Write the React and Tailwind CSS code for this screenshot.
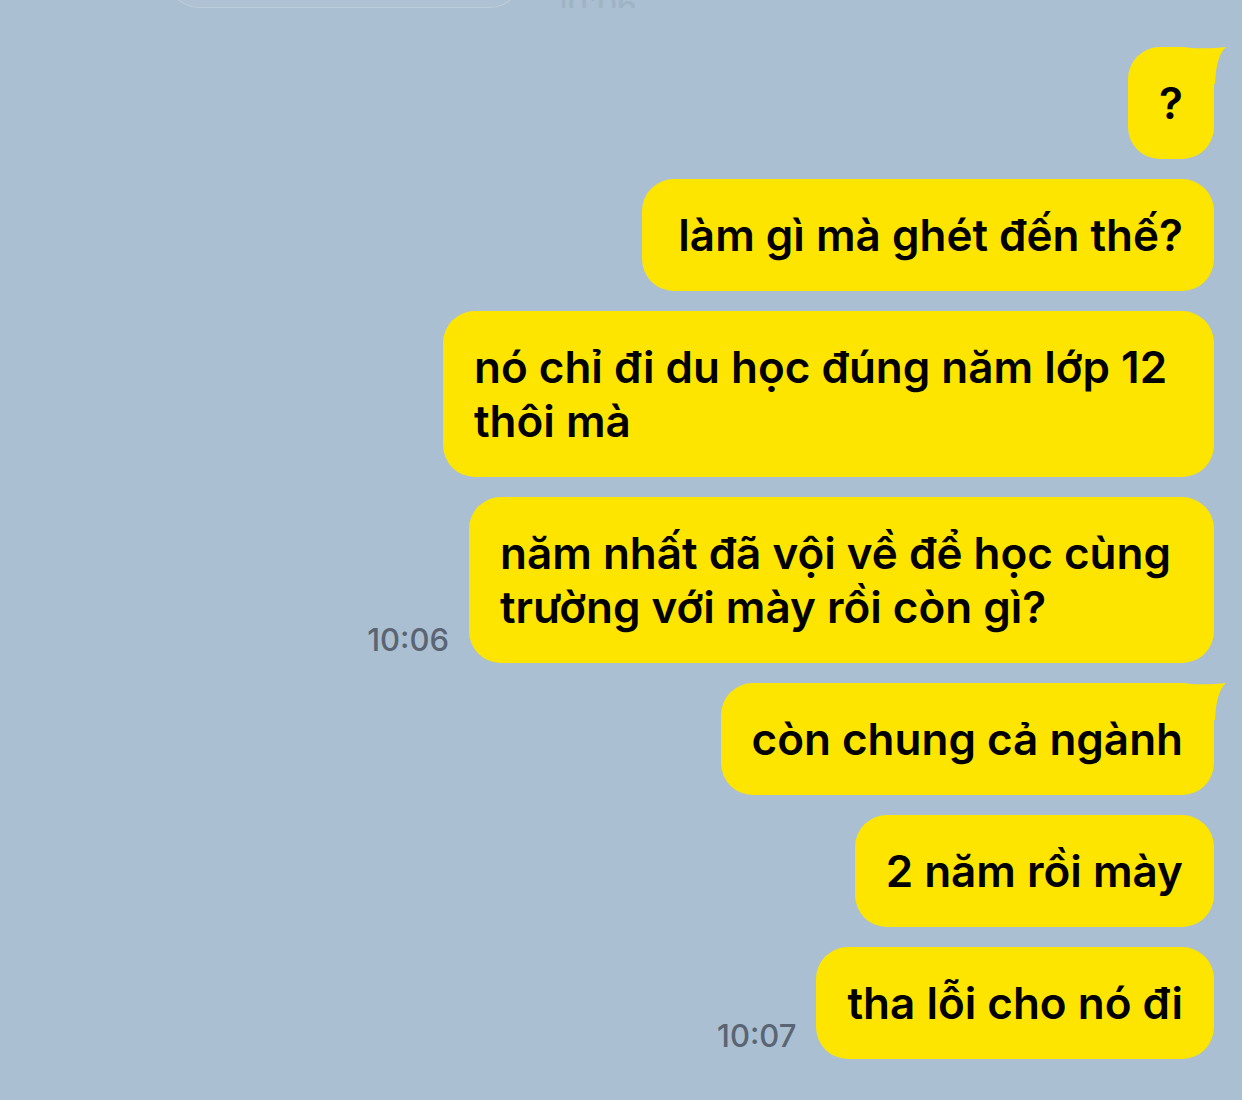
function Tail() {
  return (
    <svg viewBox="0 0 40 40" className="absolute -right-[14px] -top-[1px] w-[40px] h-[40px]" aria-hidden="true">
      <path d="M0 2 Q24 3 38 1 Q28 10 27 38 L0 38 Z" fill="#fee500" />
    </svg>
  )
}

function Bubble({ children, tail, className = '' }) {
  return (
    <div className={`relative bg-[#fee500] rounded-[32px] px-[31px] py-[29px] text-[44px] leading-[54px] font-semibold text-black whitespace-nowrap ${className}`}>
      {tail && <Tail />}
      <span className="relative">{children}</span>
    </div>
  )
}

function Time({ children }) {
  return (
    <span className="text-[31px] leading-none font-medium text-[#5a6472] mb-[8px]">
      {children}
    </span>
  )
}

export default function App() {
  return (
    <div
      className="w-[1242px] h-[1100px] overflow-hidden bg-[#aabfd1] flex flex-col"
      style={{ fontFamily: 'Inter, "Noto Sans", "Liberation Sans", sans-serif' }}
    >
      {/* faded message at the top edge */}
      <div className="h-[8px] overflow-hidden flex flex-col justify-end shrink-0">
        <div className="flex items-end gap-[33px] pl-[167px] shrink-0">
          <div className="h-[80px] w-[355px] rounded-[32px] bg-white/5 border border-white/20" />
          <span className="text-[31px] leading-none font-medium text-[#9fb3c5] -mb-[12px]">10:06</span>
        </div>
      </div>

      <div className="flex flex-col items-end gap-[20px] pr-[28px] pt-[39px]">
        <Bubble tail>?</Bubble>
        <Bubble className="pl-[36px]">làm gì mà ghét đến thế?</Bubble>
        <Bubble className="w-[771px]">
          nó chỉ đi du học đúng năm lớp 12
          <br />
          thôi mà
        </Bubble>
        <div className="flex items-end gap-[20px]">
          <Time>10:06</Time>
          <Bubble className="w-[745px]">
            năm nhất đã vội về để học cùng
            <br />
            trường với mày rồi còn gì?
          </Bubble>
        </div>
        <Bubble tail>còn chung cả ngành</Bubble>
        <Bubble>2 năm rồi mày</Bubble>
        <div className="flex items-end gap-[20px]">
          <Time>10:07</Time>
          <Bubble>tha lỗi cho nó đi</Bubble>
        </div>
      </div>
    </div>
  )
}
